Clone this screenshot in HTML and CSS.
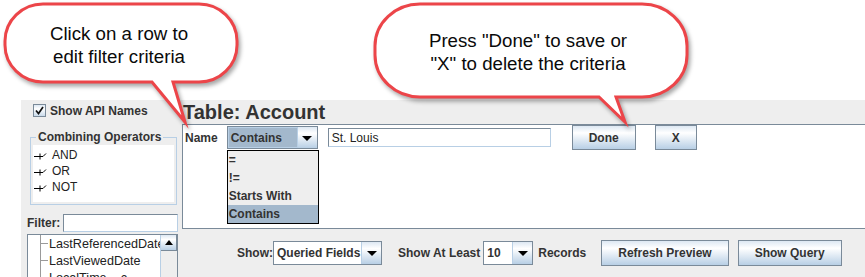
FILE: index.html
```html
<!DOCTYPE html>
<html>
<head>
<meta charset="utf-8">
<title>Filter criteria</title>
<link rel="stylesheet" href="styles.css">
</head>
<body>
<div class="app">
  <div class="left">
    <div class="chk-row">
      <span class="chk"><svg width="9" height="9" viewBox="0 0 9 9"><path d="M1 4.5 L3.5 7.5 L8 1" fill="none" stroke="#111" stroke-width="1.7"/></svg></span>
      <span class="lbl">Show API Names</span>
    </div>
    <fieldset class="group">
      <legend>Combining Operators</legend>
      <div class="ops">
        <div class="op"><svg class="op-ico" width="15" height="10" viewBox="0 0 15 10"><path d="M1 6.5H7 M7 3.5V9.5 M7 6.5H10 L13 3.5" fill="none" stroke="#000" stroke-width="1"/></svg>AND</div>
        <div class="op"><svg class="op-ico" width="15" height="10" viewBox="0 0 15 10"><path d="M1 6.5H7 M7 3.5V9.5 M7 6.5H10 L13 3.5" fill="none" stroke="#000" stroke-width="1"/></svg>OR</div>
        <div class="op"><svg class="op-ico" width="15" height="10" viewBox="0 0 15 10"><path d="M1 6.5H7 M7 3.5V9.5 M7 6.5H10 L13 3.5" fill="none" stroke="#000" stroke-width="1"/></svg>NOT</div>
      </div>
    </fieldset>
    <div class="filter-row">
      <span class="lbl">Filter:</span>
      <span class="field filter-field"></span>
    </div>
    <div class="tree">
      <div class="tree-body">
        <div class="node">LastReferencedDate</div>
        <div class="node">LastViewedDate</div>
        <div class="node">LocalTime__c</div>
      </div>
      <div class="vscroll">
        <div class="sb-up"><i class="tri-up"></i></div>
        <div class="sb-track"></div>
      </div>
    </div>
  </div>
  <div class="right">
    <div class="title">Table: Account</div>
    <div class="panel">
      <div class="crit-row">
        <span class="lbl name">Name</span>
        <div class="combo combo-op">
          <span class="combo-val sel">Contains</span>
          <span class="combo-btn"><i class="tri"></i></span>
          <ul class="popup">
            <li>=</li>
            <li>!=</li>
            <li>Starts With</li>
            <li class="sel">Contains</li>
          </ul>
        </div>
        <span class="field value-field">St. Louis</span>
        <button class="btn done">Done</button>
        <button class="btn xbtn">X</button>
      </div>
    </div>
    <div class="bottom">
      <span class="lbl">Show:</span>
      <div class="combo combo-show">
        <span class="combo-val">Queried Fields</span>
        <span class="combo-btn"><i class="tri"></i></span>
      </div>
      <span class="lbl least">Show At Least</span>
      <div class="combo combo-ten">
        <span class="combo-val">10</span>
        <span class="combo-btn"><i class="tri"></i></span>
      </div>
      <span class="lbl records">Records</span>
      <button class="btn refresh">Refresh Preview</button>
      <button class="btn query">Show Query</button>
    </div>
  </div>
</div>

<div class="callouts">
  <svg class="bubbles" width="865" height="130" viewBox="0 0 865 130">
    <path class="bubble" d="M 43 4 H 199 A 38 37 0 0 1 237 41 V 45 A 38 37 0 0 1 199 82 H 173 L 185 122 L 152 82 H 43 A 38 37 0 0 1 5 45 V 41 A 38 37 0 0 1 43 4 Z"/>
    <path class="bubble" d="M 420 4 H 642 A 45 42 0 0 1 687 46 V 55 A 45 42 0 0 1 642 97 H 616 L 625 122 L 599 97 H 420 A 45 42 0 0 1 375 55 V 46 A 45 42 0 0 1 420 4 Z"/>
  </svg>
  <div class="bubble-text text-left">Click on a row to<br>edit filter criteria</div>
  <div class="bubble-text text-right">Press "Done" to save or<br>"X" to delete the criteria</div>
</div>
</body>
</html>
```

FILE: styles.css
```css
html, body {
  margin: 0;
  padding: 0;
}
body {
  width: 865px;
  height: 277px;
  overflow: hidden;
  background: #ffffff;
  position: relative;
  font-family: "Liberation Sans", Arial, sans-serif;
  font-size: 12px;
  color: #333333;
}

.app {
  margin: 100px 0 0 21px;
  height: 177px;
  background: #eeeeee;
  display: flex;
}

.lbl {
  font-weight: bold;
  font-size: 12px;
  line-height: 14px;
  color: #333333;
  white-space: nowrap;
}

/* ---------- left column ---------- */
.left {
  width: 161px;
  flex: none;
}
.chk-row {
  display: flex;
  align-items: center;
  padding: 4px 0 0 12px;
  height: 13px;
}
.chk {
  width: 13px;
  height: 13px;
  box-sizing: border-box;
  border: 1px solid #7a8a99;
  background: linear-gradient(#dde8f3, #ffffff 35%, #c9daea);
  display: flex;
  align-items: center;
  justify-content: center;
  margin-right: 4px;
}
.chk svg { display: block; }

.group {
  margin: 13px 0 0 9px;
  padding: 1px 2px 2px 2px;
  width: 147px;
  box-sizing: border-box;
  border: 1px solid #b8cfe5;
  min-width: 0;
}
.group legend {
  padding: 0 2px;
  margin-left: 3px;
  font-weight: bold;
  font-size: 12px;
  line-height: 14px;
  color: #333333;
}
.ops {
  background: #ffffff;
  height: 57px;
  box-sizing: border-box;
  padding-top: 2px;
}
.op {
  height: 16px;
  display: flex;
  align-items: center;
  font-size: 12px;
  color: #222;
}
.op-ico {
  display: block;
  margin-right: 4px;
}

.filter-row {
  display: flex;
  align-items: center;
  margin-top: 9px;
  padding-left: 6px;
  height: 18px;
}
.field {
  display: flex;
  align-items: center;
  box-sizing: border-box;
  background: #ffffff;
  border: 1px solid #7a8a99;
  border-right-color: #b8cfe5;
  border-bottom-color: #b8cfe5;
  font-size: 12px;
  color: #222;
}
.filter-field {
  margin-left: 3px;
  width: 115px;
  height: 18px;
}

.tree {
  margin: 2px 0 0 6px;
  width: 151px;
  height: 50px;
  box-sizing: border-box;
  border: 1px solid #7a8a99;
  background: #ffffff;
  display: flex;
  overflow: hidden;
}
.tree-body {
  flex: 1;
  overflow: hidden;
  position: relative;
}
.node {
  height: 17px;
  line-height: 18px;
  padding-left: 21px;
  font-size: 12.6px;
  color: #222;
  white-space: nowrap;
  background:
    linear-gradient(#9a9a9a, #9a9a9a) 12px 0 / 1px 100% no-repeat,
    linear-gradient(#9a9a9a, #9a9a9a) 12px 8px / 8px 1px no-repeat;
}
.vscroll {
  width: 16px;
  flex: none;
  display: flex;
  flex-direction: column;
  border-left: 1px solid #b8cfe5;
}
.sb-up {
  height: 16px;
  box-sizing: border-box;
  border: 1px solid #7a8a99;
  border-left: none;
  border-top: none;
  background: linear-gradient(#dde8f3, #ffffff 30%, #b8cfe5);
  display: flex;
  align-items: center;
  justify-content: center;
}
.tri-up {
  width: 0;
  height: 0;
  border-left: 4px solid transparent;
  border-right: 4px solid transparent;
  border-bottom: 5px solid #000;
}
.sb-track {
  flex: 1;
  background: #eeeeee;
}

/* ---------- right column ---------- */
.right {
  flex: 1;
  display: flex;
  flex-direction: column;
  min-width: 0;
}
.title {
  height: 24px;
  line-height: 24px;
  font-size: 20px;
  font-weight: bold;
  padding-left: 1px;
  color: #333333;
  white-space: nowrap;
}
.panel {
  height: 105px;
  box-sizing: border-box;
  background: #ffffff;
  border: 1px solid #7a8a99;
  border-right: none;
}
.crit-row {
  display: flex;
  align-items: center;
  height: 25px;
}
.name {
  margin-left: 2px;
}

.combo {
  display: flex;
  box-sizing: border-box;
  border: 1px solid #7a8a99;
  position: relative;
  flex: none;
}
.combo-val {
  flex: 1;
  display: flex;
  align-items: center;
  background: #ffffff;
  padding-left: 3px;
  font-weight: bold;
  font-size: 12px;
  color: #333333;
  white-space: nowrap;
  border-right: 1px solid #b8cfe5;
}
.combo-val.sel {
  background: #a3b8cc;
  padding-left: 2px;
  border: 1px solid #b8cfe5;
}
.combo-btn {
  width: 19px;
  flex: none;
  display: flex;
  align-items: center;
  justify-content: center;
  background: linear-gradient(#dde8f3, #ffffff 30%, #b8cfe5);
}
.tri {
  width: 0;
  height: 0;
  border-left: 5px solid transparent;
  border-right: 5px solid transparent;
  border-top: 5px solid #000;
  margin-top: 1px;
}
.combo-op {
  margin-left: 9px;
  width: 91px;
  height: 23px;
}
.popup {
  position: absolute;
  left: -1px;
  top: 23px;
  width: 92px;
  box-sizing: border-box;
  margin: 0;
  padding: 0;
  list-style: none;
  border: 1px solid #000;
  background: #eeeeee;
  z-index: 2;
}
.popup li {
  height: 18px;
  line-height: 18px;
  padding-left: 1px;
  font-weight: bold;
  font-size: 12px;
  color: #333333;
  white-space: nowrap;
}
.popup li.sel {
  background: #a3b8cc;
}

.value-field {
  margin-left: 10px;
  width: 223px;
  height: 19px;
  padding-left: 3px;
}

.btn {
  height: 25px;
  box-sizing: border-box;
  padding: 0 16px;
  border: 1px solid #7a8a99;
  border-radius: 0;
  background: linear-gradient(#dde8f3, #ffffff 30%, #b8cfe5);
  font-family: "Liberation Sans", Arial, sans-serif;
  font-weight: bold;
  font-size: 12px;
  color: #333333;
  white-space: nowrap;
  flex: none;
}
.done {
  margin-left: 21px;
}
.xbtn {
  margin-left: 19px;
}

.bottom {
  flex: 1;
  display: flex;
  align-items: center;
  padding-left: 55px;
}
.combo-show {
  width: 109px;
  height: 24px;
}
.least {
  margin-left: 16px;
}
.combo-ten {
  margin-left: 3px;
  width: 50px;
  height: 24px;
}
.records {
  margin-left: 5px;
}
.refresh {
  margin-left: 15px;
  height: 26px;
}
.query {
  margin-left: 9px;
  height: 26px;
}

/* ---------- callouts ---------- */
.callouts {
  position: absolute;
  left: 0;
  top: 0;
  width: 865px;
  height: 130px;
  pointer-events: none;
}
.bubbles {
  position: absolute;
  left: 0;
  top: 0;
  overflow: visible;
  filter: drop-shadow(2px 3px 2px rgba(0, 0, 0, 0.35));
}
.bubble {
  fill: #ffffff;
  stroke: #ec4549;
  stroke-width: 3;
  stroke-linejoin: miter;
  stroke-miterlimit: 10;
}
.bubble-text {
  position: absolute;
  font-family: "Liberation Sans", Arial, sans-serif;
  font-size: 18.7px;
  line-height: 23px;
  color: #0a0a0a;
  text-align: center;
  white-space: nowrap;
}
.text-left {
  left: 0;
  top: 22px;
  width: 238px;
}
.text-right {
  left: 375px;
  top: 29px;
  width: 306px;
}
```
